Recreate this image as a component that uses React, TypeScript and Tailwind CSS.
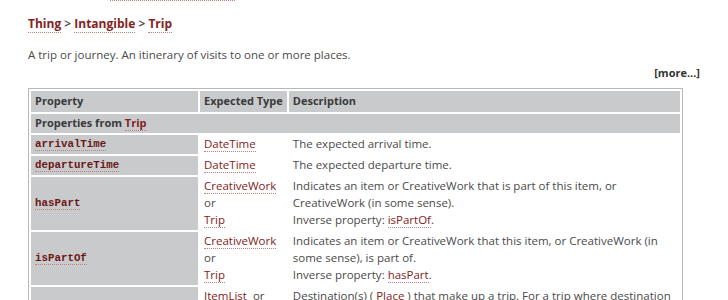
import type { ReactNode } from 'react'

const linkCls = 'text-[#842222] border-b border-dotted border-[#c08080]'

function L({ children, bold }: { children: ReactNode; bold?: boolean }) {
  return <a className={`${linkCls} ${bold ? 'font-bold text-[#6e1515]' : ''}`}>{children}</a>
}

const rows: { name: string; types: ReactNode; desc: ReactNode }[] = [
  { name: 'arrivalTime', types: <L>DateTime</L>, desc: 'The expected arrival time.' },
  { name: 'departureTime', types: <L>DateTime</L>, desc: 'The expected departure time.' },
  {
    name: 'hasPart',
    types: (
      <>
        <L>CreativeWork</L>
        <div>or</div>
        <L>Trip</L>
      </>
    ),
    desc: (
      <>
        Indicates an item or CreativeWork that is part of this item, or CreativeWork (in some sense).
        <br />
        Inverse property: <L>isPartOf</L>.
      </>
    ),
  },
  {
    name: 'isPartOf',
    types: (
      <>
        <L>CreativeWork</L>
        <div>or</div>
        <L>Trip</L>
      </>
    ),
    desc: (
      <>
        Indicates an item or CreativeWork that this item, or CreativeWork (in some sense), is part of.
        <br />
        Inverse property: <L>hasPart</L>.
      </>
    ),
  },
  {
    name: 'itinerary',
    types: (
      <>
        <L>ItemList</L>&nbsp; or
        <div>
          <L>Place</L>
        </div>
      </>
    ),
    desc: (
      <>
        Destination(s) ( <L>Place</L> ) that make up a trip. For a trip where destination order is important use{' '}
        <L>ItemList</L> to specify that order (see examples).
      </>
    ),
  },
]

export default function App() {
  return (
    <div className="min-h-[300px] bg-white px-[28px] font-['Open_Sans',sans-serif] text-[11.5px] leading-[17px] text-[#4a4a4a]">
      <div className="ml-[82px] h-[1px] w-[125px] border-b border-dotted border-[#c08080]" />
      <div className="mt-[14px] text-[12px] font-bold leading-[18px] text-[#555]">
        <L bold>Thing</L> &gt; <L bold>Intangible</L> &gt; <L bold>Trip</L>
      </div>
      <p className="mt-[13px]">A trip or journey. An itinerary of visits to one or more places.</p>
      <div className="mt-[1px] text-right text-[11px] font-bold text-[#333]">[more...]</div>
      <table className="mt-[7px] w-[655px] border-separate border-spacing-[2px] border border-[#b8b8b8]">
        <thead>
          <tr className="text-left text-[11px] font-bold leading-[17px] text-[#3a3a3a]">
            <th className="w-[167px] bg-[#c8cacc] px-[4px] pt-[1px] pb-[3px]">Property</th>
            <th className="w-[84px] bg-[#c8cacc] px-[4px] pt-[1px] pb-[3px] whitespace-nowrap">Expected Type</th>
            <th className="bg-[#c8cacc] px-[4px] pt-[1px] pb-[3px]">Description</th>
          </tr>
        </thead>
        <tbody>
          <tr>
            <th colSpan={3} className="bg-[#c8cacc] px-[4px] pt-0 pb-[2px] text-left text-[11px] font-bold leading-[17px] text-[#3a3a3a]">
              Properties from <L bold>Trip</L>
            </th>
          </tr>
          {rows.map((r) => (
            <tr key={r.name}>
              <td className="bg-[#c8cacc] px-[4px] py-[1px] align-middle font-['Liberation_Mono',monospace] text-[10.8px] font-bold leading-[17px]">
                <a className="text-[#6e1515] border-b border-dotted border-[#c08080]">{r.name}</a>
              </td>
              <td className="px-[4px] pt-0 pb-[2px] align-top whitespace-nowrap">{r.types}</td>
              <td className="px-[4px] pt-0 pb-[2px] align-top">{r.desc}</td>
            </tr>
          ))}
        </tbody>
      </table>
    </div>
  )
}
